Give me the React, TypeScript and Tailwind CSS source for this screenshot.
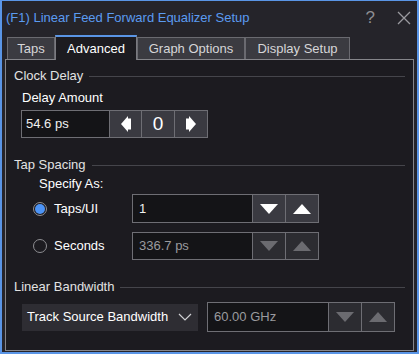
import React from "react";

const font = { fontFamily: '"Liberation Sans", Arial, sans-serif' };

function Tri({ dir, muted }: { dir: "up" | "down"; muted?: boolean }) {
  const fill = muted ? "#6b6b70" : "#ffffff";
  return (
    <svg width="18" height="10" viewBox="0 0 18 10">
      {dir === "down" ? (
        <polygon points="0,0 18,0 9,10" fill={fill} />
      ) : (
        <polygon points="0,10 18,10 9,0" fill={fill} />
      )}
    </svg>
  );
}

function Step({ dir }: { dir: "left" | "right" }) {
  return (
    <svg width="10" height="16" viewBox="0 0 10 16">
      {dir === "left" ? (
        <polygon points="7,0 0,8 7,16 7,13.5 10,13.5 10,2.5 7,2.5" fill="#ffffff" />
      ) : (
        <polygon points="3,0 10,8 3,16 3,13.5 0,13.5 0,2.5 3,2.5" fill="#ffffff" />
      )}
    </svg>
  );
}

function Section({ title }: { title: string }) {
  return (
    <div className="flex h-4 items-center text-[13px] leading-4 text-[#e2e2e2]">
      <span>{title}</span>
      <div className="ml-[6px] h-px flex-1 bg-[#45454b]" />
    </div>
  );
}

function Spin({ value, muted, w, h }: { value: string; muted?: boolean; w: string; h: string }) {
  return (
    <div className={`flex ${w} ${h} border border-[#6e6e74]`}>
      <div
        className={`flex flex-1 items-center bg-[#141417] pl-[6px] text-[13px] ${
          muted ? "text-[#9a9a9e]" : "text-[#f0f0f0]"
        }`}
      >
        {value}
      </div>
      <div
        className={`flex w-[33px] items-center justify-center border-l border-[#6e6e74] ${
          muted ? "bg-[#2c2c31]" : "bg-[#3a3a41]"
        }`}
      >
        <Tri dir="down" muted={muted} />
      </div>
      <div
        className={`flex w-[33px] items-center justify-center border-l border-[#6e6e74] ${
          muted ? "bg-[#2c2c31]" : "bg-[#3a3a41]"
        }`}
      >
        <Tri dir="up" muted={muted} />
      </div>
    </div>
  );
}

function Radio({ on, label }: { on?: boolean; label: string }) {
  return (
    <div className="flex w-[99px] items-center">
      <div className="flex h-[14px] w-[14px] items-center justify-center rounded-full border border-[#8e8e92]">
        {on && <div className="h-[10px] w-[10px] rounded-full bg-[#4d94f5]" />}
      </div>
      <span className="ml-[7px] text-[13px] text-white">{label}</span>
    </div>
  );
}

export default function App() {
  const tabs = [
    { t: "Taps", w: "w-[48px]" },
    { t: "Advanced", w: "w-[82px]" },
    { t: "Graph Options", w: "w-[108px]" },
    { t: "Display Setup", w: "w-[105px]" },
  ];
  return (
    <div
      style={font}
      className="flex h-[354px] w-[419px] flex-col border-t border-r-2 border-b-2 border-l-2 border-[#5a95e6] bg-[#25242a]"
    >
      {/* title bar */}
      <div className="flex h-[33px] items-center pr-[6px] pl-[4px]">
        <span className="text-[13px] text-[#5b9bf1]">(F1) Linear Feed Forward Equalizer Setup</span>
        <span className="ml-auto text-[17px] leading-none text-[#8e8e93]">?</span>
        <svg className="ml-[22px]" width="14" height="14" viewBox="0 0 14 14">
          <path d="M1 1 L13 13 M13 1 L1 13" stroke="#9a9a9f" strokeWidth="1.3" />
        </svg>
      </div>

      {/* tabs */}
      <div className="flex h-[25px] items-end pl-[5px]">
        {tabs.map(({ t, w }) => {
          const active = t === "Advanced";
          return (
            <div
              key={t}
              className={
                active
                  ? `relative z-10 -mb-px flex h-[25px] ${w} items-center justify-center border-x border-t-2 border-x-[#7a7a80] border-t-[#5a95e6] bg-[#1c1b20] text-[13px] whitespace-nowrap text-white`
                  : `flex h-[22px] ${w} items-center justify-center border-x border-t border-[#6a6a70] bg-[#3b3b41] text-[13px] whitespace-nowrap text-[#d6d6d8]`
              }
            >
              {t}
            </div>
          );
        })}
      </div>

      {/* panel */}
      <div className="mx-[3px] mb-[1px] flex flex-1 flex-col border border-[#85858a] bg-[#1c1b20] px-2 pt-2">
        <Section title="Clock Delay" />
        <div className="mt-[6px] ml-2 h-4 text-[13px] leading-4 text-white">Delay Amount</div>
        <div className="mt-1 ml-[7px] flex h-[28px] w-[187px] border border-[#6e6e74]">
          <div className="flex flex-1 items-center bg-[#141417] pl-[4px] text-[13px] text-[#f0f0f0]">54.6 ps</div>
          <div className="flex w-[32px] items-center justify-center border-l border-[#6e6e74] bg-[#3a3a41]">
            <Step dir="left" />
          </div>
          <div className="flex w-[33px] items-center justify-center border-l border-[#6e6e74] bg-[#3a3a41] text-[19px] font-light text-white">
            0
          </div>
          <div className="flex w-[33px] items-center justify-center border-l border-[#6e6e74] bg-[#3a3a41]">
            <Step dir="right" />
          </div>
        </div>

        <div className="mt-[19px]">
          <Section title="Tap Spacing" />
        </div>
        <div className="mt-[3px] ml-[25px] h-4 text-[13px] leading-4 text-white">Specify As:</div>
        <div className="mt-[2px] ml-[19px] flex items-center">
          <Radio on label="Taps/UI" />
          <Spin value="1" w="w-[187px]" h="h-[29px]" />
        </div>
        <div className="mt-[9px] ml-[19px] flex items-center">
          <Radio label="Seconds" />
          <Spin value="336.7 ps" muted w="w-[187px]" h="h-[28px]" />
        </div>

        <div className="mt-[19px]">
          <Section title="Linear Bandwidth" />
        </div>
        <div className="mt-[7px] ml-2 flex items-center">
          <div className="flex h-[27px] w-[176px] items-center justify-between bg-[#2e2d33] pr-[6px] pl-[5px] text-[13px] whitespace-nowrap text-white">
            <span>Track Source Bandwidth</span>
            <svg width="14" height="8" viewBox="0 0 14 8">
              <path d="M1 1 L7 7 L13 1" stroke="#d0d0d4" strokeWidth="1.2" fill="none" />
            </svg>
          </div>
          <div className="ml-[9px]">
            <Spin value="60.00 GHz" muted w="w-[188px]" h="h-[30px]" />
          </div>
        </div>
      </div>
    </div>
  );
}
